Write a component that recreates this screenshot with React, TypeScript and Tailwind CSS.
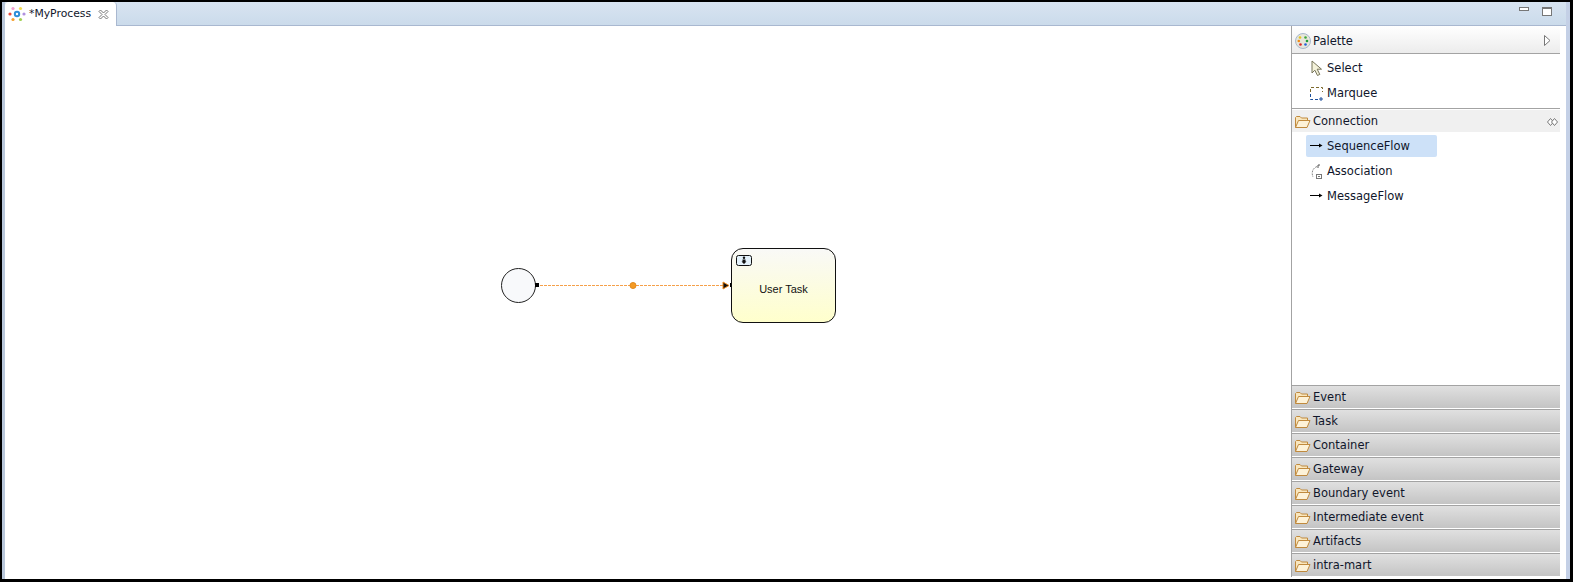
import type { ReactNode } from "react"

const uiFont = "font-['DejaVu_Sans',sans-serif] text-[11.5px] text-[#10162b]"

function FolderIcon() {
  return (
    <svg width="17" height="14" viewBox="0 0 17 14" className="shrink-0">
      <path d="M1.5 12.5V2.5L2.5 1.5H6L7.5 3H13.5V5.5" fill="#f9e6bd" stroke="#c08a3e" />
      <path d="M1.5 12.5L4.5 5.5H16L13 12.5Z" fill="#fdf2d8" stroke="#c08a3e" />
    </svg>
  )
}

function ArrowIcon() {
  return (
    <svg width="13" height="7" viewBox="0 0 13 7" className="mb-[2px] shrink-0">
      <path d="M0 3.5H10" stroke="#000" />
      <path d="M9 1.5L12.5 3.5L9 5.5Z" fill="#000" />
    </svg>
  )
}

function ToolRow({ icon, label, active }: { icon: ReactNode; label: string; active?: boolean }) {
  return (
    <div className="flex h-[25px] items-center">
      <div className={`ml-[14px] flex h-[22px] w-[131px] items-center rounded-[2px] ${active ? "-mt-[2px] bg-[#cde1f8] pt-[2px]" : ""}`}>
        <div className="flex w-[21px] shrink-0 justify-center">{icon}</div>
        <span className={uiFont}>{label}</span>
      </div>
    </div>
  )
}

function Drawer({ label }: { label: string }) {
  return (
    <div className="flex h-[24px] items-center gap-[2px] border-b border-t border-b-white border-t-[#a3a3a3] bg-[linear-gradient(#e0e0e0,#c4c4c4)] bg-clip-padding pl-[2px] pt-[2px]">
      <FolderIcon />
      <span className={uiFont}>{label}</span>
    </div>
  )
}

const drawers = ["Event", "Task", "Container", "Gateway", "Boundary event", "Intermediate event", "Artifacts", "intra-mart"]

function Diagram() {
  return (
    <div className="relative min-w-0 flex-1 bg-white">
      <div className="absolute left-[496px] top-[242px] h-[35px] w-[35px] rounded-full border border-[#222] bg-[#f8f9fb]" />
      <svg width="200" height="16" viewBox="0 0 200 16" className="absolute left-[530px] top-[251px]">
        <path d="M5 8.5H194" stroke="#f5a04a" strokeDasharray="3 1" />
        <rect x="0" y="6" width="4" height="4" fill="#000" />
        <circle cx="98" cy="8.5" r="3" fill="#f59a23" stroke="#e08a20" />
        <path d="M188 5L194 8.5L188 12Z" fill="#111" stroke="#f08a1d" />
        <rect x="195" y="6" width="4" height="4" fill="#000" />
      </svg>
      <div className="absolute left-[726px] top-[222px] flex h-[75px] w-[105px] items-center justify-center rounded-[12px] border border-[#111] bg-[linear-gradient(#f9f9f7,#ffffcc)]">
        <svg width="16" height="11" viewBox="0 0 16 11" className="absolute left-[4px] top-[6px]">
          <rect x="0.5" y="0.5" width="15" height="10" rx="2" fill="#e4f2fb" stroke="#111" />
          <circle cx="8" cy="2.8" r="1.2" fill="#111" />
          <path d="M6.5 4.5H9.5V6.5H10.5L8 9L5.5 6.5H6.5Z" fill="#111" />
        </svg>
        <span className="mt-[8px] font-['Liberation_Sans',sans-serif] text-[11px] text-[#111]">User Task</span>
      </div>
    </div>
  )
}

function Palette() {
  return (
    <div className="flex w-[269px] shrink-0 flex-col border-l border-[#a3a3a3] bg-white">
      <div className="flex h-[28px] items-center border-b border-[#a3a3a3] bg-[linear-gradient(#ffffff,#ececec)] pl-[3px] pr-[9px] pt-[2px]">
        <svg width="16" height="16" viewBox="0 0 16 16" className="shrink-0">
          <circle cx="8" cy="8" r="7.5" fill="#e6e6da" stroke="#a8b8cc" />
          <circle cx="5" cy="4.5" r="1.3" fill="#e6c21e" />
          <circle cx="10.5" cy="4.5" r="1.3" fill="#3aa83a" />
          <circle cx="3.8" cy="8" r="1.3" fill="#ef8a17" />
          <circle cx="12" cy="8" r="1.3" fill="#1e9b3c" />
          <circle cx="5.5" cy="11.5" r="1.3" fill="#d92626" />
          <circle cx="10.5" cy="11.5" r="1.3" fill="#2660d9" />
        </svg>
        <span className={`ml-[2px] pt-[2px] ${uiFont}`}>Palette</span>
        <svg width="7" height="11" viewBox="0 0 7 11" className="ml-auto">
          <path d="M0.5 0.5L6 5.5L0.5 10.5Z" fill="#fff" stroke="#777" />
        </svg>
      </div>
      <div className="flex h-[55px] flex-col border-b border-[#a3a3a3] pt-[2px]">
        <ToolRow
          label="Select"
          icon={
            <svg width="12" height="17" viewBox="0 0 12 17">
              <path d="M1 1V13L3.8 10.2L6.5 15.5L8.8 14.4L6.2 9.2H10.5Z" fill="#f4f2da" stroke="#77745a" />
            </svg>
          }
        />
        <ToolRow
          label="Marquee"
          icon={
            <svg width="14" height="14" viewBox="0 0 14 14">
              <path d="M.5 5V.5H12.5V5" fill="none" stroke="#7d6a2c" strokeDasharray="3 2" />
              <path d="M.5 7V12.5H9" fill="none" stroke="#1c4f9c" strokeDasharray="3 2" />
              <path d="M11 10V14M9 12H13" stroke="#1c4f9c" />
            </svg>
          }
        />
      </div>
      <div className="mt-[1px] flex h-[22px] items-center gap-[2px] bg-[#f0f0f0] pl-[2px] pr-[2px] pt-[2px]">
        <FolderIcon />
        <span className={uiFont}>Connection</span>
        <svg width="11" height="8" viewBox="0 0 11 8" className="ml-auto">
          <path d="M3.5 .5L.5 4L3.5 7.5L6.5 4Z" fill="#fff" stroke="#777" />
          <path d="M7.5 .5L10.5 4L7.5 7.5L4.5 4Z" fill="#fff" stroke="#777" />
        </svg>
      </div>
      <div className="flex-1 pt-[2px]">
        <ToolRow label="SequenceFlow" active icon={<ArrowIcon />} />
        <ToolRow
          label="Association"
          icon={
            <svg width="14" height="16" viewBox="0 0 14 16">
              <path d="M7 2.5C3 4 1 8 3 13" fill="none" stroke="#888" strokeDasharray="2 1" />
              <path d="M8 1H10M8 1V4" fill="none" stroke="#555" />
              <rect x="6.5" y="10.5" width="5" height="4" fill="#fff" stroke="#777" />
              <path d="M8 12.5H10" stroke="#777" />
            </svg>
          }
        />
        <ToolRow label="MessageFlow" icon={<ArrowIcon />} />
      </div>
      {drawers.map((d) => (
        <Drawer key={d} label={d} />
      ))}
    </div>
  )
}

export default function App() {
  return (
    <div className="h-[582px] w-[1573px] overflow-hidden bg-black pb-[3px] pl-[2px] pr-[3px] pt-[2px]">
      <div className="flex h-full flex-col border-l-[3px] border-r-4 border-l-[#b9c7da] border-r-[#c4d0e6] bg-white">
        <div className="flex h-[24px] shrink-0 items-stretch border-b border-[#a9b8d0] bg-[linear-gradient(#d8e4f1,#cbdbeb)]">
          <div className="-mb-px flex w-[112px] items-center rounded-t-[4px] border-r border-[#a9b8d0] bg-white pl-[3px]">
            <svg width="18" height="16" viewBox="0 0 18 16" className="shrink-0">
              <circle cx="9" cy="8" r="3.2" fill="#2f8fd8" />
              <circle cx="9" cy="8" r="1.2" fill="#fff" />
              <circle cx="5" cy="2.5" r="1.6" fill="#f2a0d0" />
              <circle cx="12.5" cy="2.5" r="1.6" fill="#f4dc50" />
              <circle cx="2" cy="8" r="1.6" fill="#ea4a3a" />
              <circle cx="16" cy="8" r="1.6" fill="#b090e0" />
              <circle cx="5" cy="13.5" r="1.6" fill="#f6a030" />
              <circle cx="12.5" cy="13.5" r="1.6" fill="#a0d050" />
            </svg>
            <span className="ml-[3px] font-['DejaVu_Sans',sans-serif] text-[10.8px] text-[#10162b]">*MyProcess</span>
            <svg width="11" height="11" viewBox="0 0 11 11" className="ml-[7px]">
              <path d="M1 2.5L2.5 1L5.5 4L8.5 1L10 2.5L7 5.5L10 8.5L8.5 10L5.5 7L2.5 10L1 8.5L4 5.5Z" fill="#fff" stroke="#777" />
            </svg>
          </div>
          <div className="ml-auto flex items-start gap-[13px] pr-[14px] pt-[5px]">
            <div className="h-[4px] w-[10px] border border-[#777] bg-white" />
            <div className="h-[9px] w-[10px] border border-t-2 border-[#777] bg-white" />
          </div>
        </div>
        <div className="flex min-h-0 flex-1 pb-[2px] pr-[6px]">
          <Diagram />
          <Palette />
        </div>
      </div>
    </div>
  )
}
